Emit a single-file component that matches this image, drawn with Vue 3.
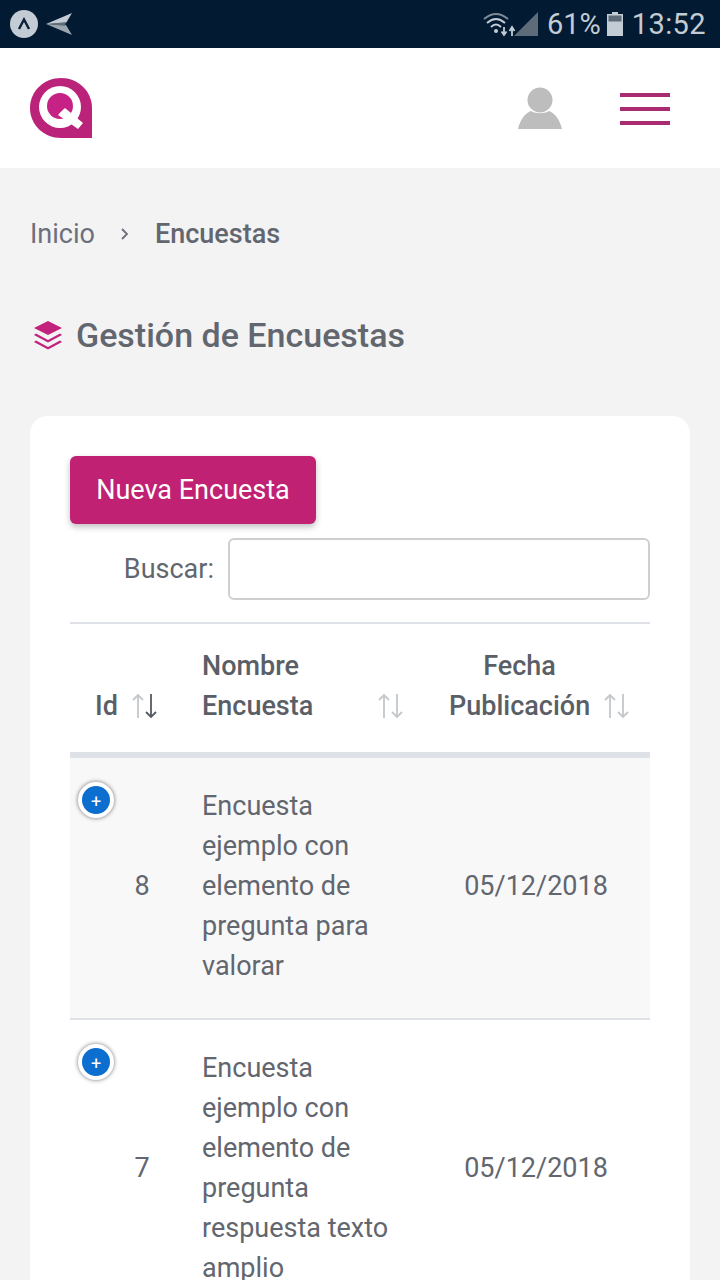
<script setup>
const rows = [
  { id: 8, name: 'Encuesta ejemplo con elemento de pregunta para valorar', date: '05/12/2018' },
  { id: 7, name: 'Encuesta ejemplo con elemento de pregunta respuesta texto amplio', date: '05/12/2018' }
]
</script>

<template>
  <div class="page">
    <div class="status">
      <div class="status-left">
        <span class="a-badge">
          <svg width="16" height="14" viewBox="0 0 16 14"><path d="M3 12 8 2.5 13 12" fill="none" stroke="#0a1f38" stroke-width="2.4"/></svg>
        </span>
        <svg class="plane" width="30" height="24" viewBox="0 0 30 24">
          <path d="M1 12 27 1 21 11Z" fill="#c3ccd4"/>
          <path d="M1 12 21 13 27 23Z" fill="#9aa5af"/>
          <path d="M4 12 21 10 20 14Z" fill="#5f6c79"/>
        </svg>
      </div>
      <div class="status-right">
        <svg width="36" height="26" viewBox="0 0 36 26">
          <path d="M2 8Q14-2 26 8" fill="none" stroke="#7d8b98" stroke-width="2"/>
          <path d="M5 12Q14 4 23 12" fill="none" stroke="#c3ccd4" stroke-width="2"/>
          <path d="M9 16Q14 11 19 16" fill="none" stroke="#c3ccd4" stroke-width="2"/>
          <circle cx="14" cy="20" r="2" fill="#c3ccd4"/>
          <path d="M22 16v7M19.500 20.500 22 24l2.500-3.500M30 25v-8M27.500 20 30 16l2.500 4" fill="none" stroke="#c3ccd4" stroke-width="1.800"/>
        </svg>
        <svg class="signal" width="26" height="26" viewBox="0 0 26 26"><path d="M1 25 25 1V25Z" fill="#5e6b78"/></svg>
        <span class="pct">61%</span>
        <svg class="batt" width="16" height="24" viewBox="0 0 16 24">
          <path d="M5 0h6v2h5v22H0V2h5Z" fill="#c3ccd4"/>
          <rect x="1.500" y="3.500" width="13" height="6" fill="#5e6b78"/>
        </svg>
        <span class="time">13:52</span>
      </div>
    </div>

    <header class="top">
      <svg class="logo" width="64" height="62" viewBox="0 0 64 62">
        <path d="M32 1C15 1 1 14 1 31s14 30 31 30h31V31C63 14 49 1 32 1Z" fill="#bb2279"/>
        <circle cx="31" cy="30" r="21" fill="#fff"/>
        <circle cx="31" cy="29" r="13" fill="#c62184"/>
        <path d="M29 38l7-7 18 15-5 6Z" fill="#fff"/>
        <path d="M30 37l5-5 5 4-4 5Z" fill="#fff"/>
      </svg>
      <div class="top-right">
        <svg width="46" height="44" viewBox="0 0 46 44">
          <circle cx="23" cy="14" r="12.500" fill="#bdbdbd"/>
          <path d="M1 43C3 34 8 27 14 25c5 3 13 3 18 0 6 2 11 9 13 18Z" fill="#bdbdbd"/>
        </svg>
        <div class="burger"><i></i><i></i><i></i></div>
      </div>
    </header>

    <main class="content">
      <nav class="crumbs">
        <span class="crumb">Inicio</span>
        <svg class="chev" width="10" height="14" viewBox="0 0 10 14"><path d="M2 2l5 5-5 5" fill="none" stroke="#6c6f7c" stroke-width="1.800"/></svg>
        <strong class="crumb-cur">Encuestas</strong>
      </nav>

      <h1 class="title">
        <svg width="30" height="30" viewBox="0 0 30 30">
          <path d="M15 1 29 8 15 15 1 8Z" fill="#c2217c"/>
          <path d="M3 13.500 15 20 27 13.500 29 15 15 22.500 1 15Z" fill="#c2217c"/>
          <path d="M3 20.500 15 27 27 20.500 29 22 15 29.500 1 22Z" fill="#c2217c"/>
        </svg>
        <span>Gestión de Encuestas</span>
      </h1>

      <section class="card">
        <button class="new-btn">Nueva Encuesta</button>
        <div class="search">
          <label>Buscar:</label>
          <div class="input"></div>
        </div>

        <div class="thead">
          <div class="th c-id">
            <span class="th-text">Id</span>
            <svg class="sort" width="28" height="26" viewBox="0 0 28 26">
              <path d="M7 25V2M2 7l5-5 5 5" fill="none" stroke="#c4c7cb" stroke-width="1.800"/>
              <path d="M20 1v23M15 19l5 5 5-5" fill="none" stroke="#555a62" stroke-width="1.800"/>
            </svg>
          </div>
          <div class="th c-name">
            <span class="th-text">Nombre<br>Encuesta</span>
            <svg class="sort" width="28" height="26" viewBox="0 0 28 26">
              <path d="M7 25V2M2 7l5-5 5 5" fill="none" stroke="#c4c7cb" stroke-width="1.800"/>
              <path d="M20 1v23M15 19l5 5 5-5" fill="none" stroke="#c4c7cb" stroke-width="1.800"/>
            </svg>
          </div>
          <div class="th c-date">
            <span class="th-text center">Fecha<br>Publicación</span>
            <svg class="sort" width="28" height="26" viewBox="0 0 28 26">
              <path d="M7 25V2M2 7l5-5 5 5" fill="none" stroke="#c4c7cb" stroke-width="1.800"/>
              <path d="M20 1v23M15 19l5 5 5-5" fill="none" stroke="#c4c7cb" stroke-width="1.800"/>
            </svg>
          </div>
        </div>

        <div v-for="(r, i) in rows" :key="r.id" class="row" :class="{ odd: i === 0 }">
          <div class="td c-id">
            <span class="plus">+</span>
            <span class="id">{{ r.id }}</span>
          </div>
          <div class="td c-name">{{ r.name }}</div>
          <div class="td c-date date">{{ r.date }}</div>
        </div>
      </section>
    </main>
  </div>
</template>

<style>
html, body { margin: 0; background: #f3f3f4; }
</style>

<style scoped>
.page {
  width: 720px;
  height: 1280px;
  overflow: hidden;
  background: #f3f3f4;
  font-family: Roboto, "Liberation Sans", sans-serif;
  color: #62666e;
}
.status {
  height: 48px;
  background: #021a32;
  display: flex;
  align-items: center;
  justify-content: space-between;
  padding: 0 14px 0 10px;
  color: #c3ccd4;
}
.status-left, .status-right { display: flex; align-items: center; }
.a-badge {
  width: 28px; height: 28px; border-radius: 50%;
  background: #c3ccd4;
  display: flex; align-items: center; justify-content: center;
}
.plane { margin-left: 7px; }
.status-right { gap: 0; }
.signal { margin-left: -5px; margin-right: 8px; }
.pct { font-size: 29px; line-height: 48px; }
.batt { margin-left: 6px; margin-right: 9px; }
.time { font-size: 29px; line-height: 48px; letter-spacing: .4px; }
.top {
  height: 120px;
  background: #fff;
  display: flex;
  align-items: center;
  justify-content: space-between;
  padding: 0 50px 0 29px;
}
.logo { display: block; }
.top-right { display: flex; align-items: center; gap: 57px; }
.burger { width: 50px; display: flex; flex-direction: column; gap: 10px; margin-top: 2px; }
.burger i { display: block; height: 4px; background: #a92c72; }
.content { padding: 46px 30px 0; }
.crumbs { display: flex; align-items: center; height: 40px; font-size: 27px; }
.crumb { color: #6c6f7c; }
.chev { margin: 0 25px 0 25px; }
.crumb-cur { font-weight: 500; color: #62666f; }
.title {
  display: flex; align-items: center; gap: 13px;
  margin: 61px 0 0 3px;
  font-size: 34px; line-height: 40px; font-weight: 500;
  color: #62666f;
}
.card {
  margin-top: 61px;
  background: #fff;
  border-radius: 18px;
  padding: 40px;
  height: 900px;
}
.new-btn {
  display: block;
  width: 246px; height: 68px;
  border: 0; border-radius: 6px;
  background: #c02173;
  color: #fff;
  font: 400 27px Roboto, sans-serif;
  box-shadow: 0 3px 6px rgba(0,0,0,.25);
  padding: 0;
}
.search {
  display: flex; align-items: center; justify-content: flex-end;
  margin-top: 14px; gap: 14px;
  font-size: 27px;
}
.input {
  width: 422px; height: 62px; box-sizing: border-box;
  border: 2px solid #cfcfcf; border-radius: 6px; background: #fff;
}
.thead {
  margin-top: 22px;
  display: flex;
  border-top: 2px solid #dee2e6;
  border-bottom: 6px solid #dee2e6;
  height: 128px;
  box-sizing: content-box;
}
.c-id { width: 108px; flex: none; box-sizing: border-box; }
.c-name { width: 247px; flex: none; box-sizing: border-box; padding-left: 24px; }
.c-date { flex: 1; box-sizing: border-box; }
.th {
  display: flex; align-items: flex-end; justify-content: space-between;
  padding-bottom: 26px;
  font-size: 27px; line-height: 40px; font-weight: 500;
  color: #5a5f67;
}
.th.c-id { padding-left: 25px; padding-right: 19px; }
.th.c-name { padding-right: 20px; }
.th.c-date { padding-left: 24px; padding-right: 19px; }
.th-text { display: block; }
.center { text-align: center; }
.sort { margin-bottom: 7px; }
.row {
  display: flex; align-items: center;
  font-size: 27px; line-height: 40px;
  padding: 28px 0 32px;
  border-bottom: 2px solid #dee2e6;
}
.row.odd { background: #f8f8f9; padding: 28px 0 32px; }
.row .c-id { position: static; }
.td.c-id { display: flex; justify-content: center; padding-left: 36px; }
.row { position: relative; }
.plus {
  position: absolute; left: 8px; top: 24px;
  width: 28px; height: 28px; box-sizing: content-box;
  border: 4px solid #fff; border-radius: 50%;
  background: #0c6fd0; color: #fff;
  font: 400 18px/32px Roboto, sans-serif; text-align: center;
  box-shadow: 0 0 4px rgba(0,0,0,.55);
}
.td.c-name { padding-right: 30px; }
.date { text-align: center; padding-left: 0; padding-right: 3px; }
</style>
